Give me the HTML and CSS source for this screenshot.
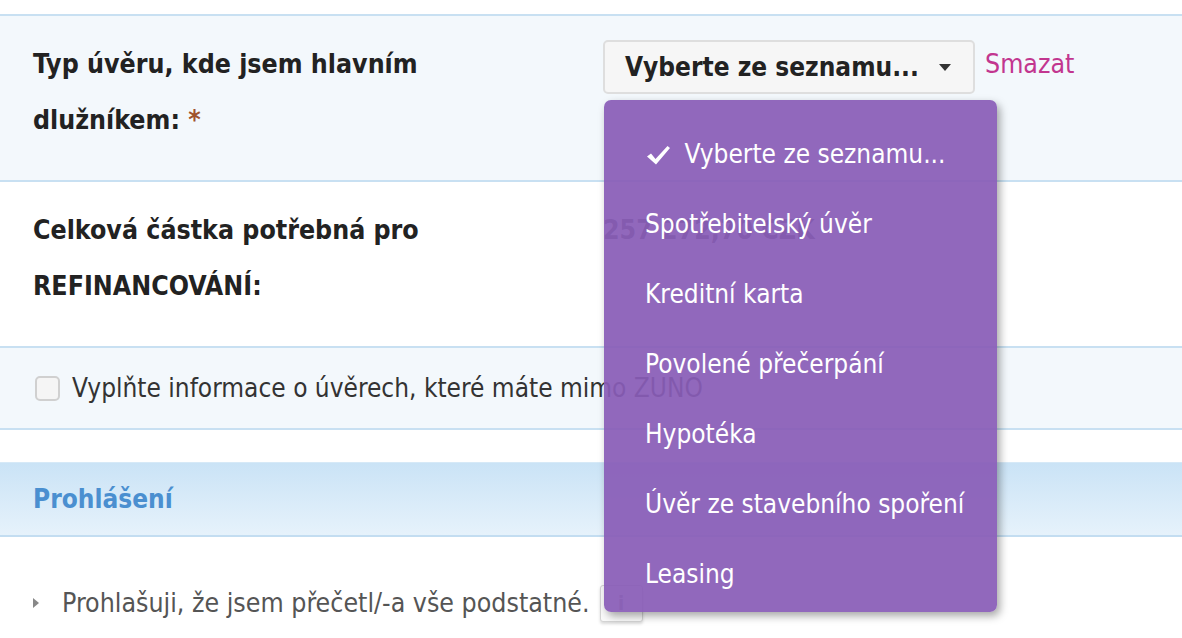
FILE: index.html
```html
<!DOCTYPE html>
<html lang="cs">
<head>
    <meta charset="UTF-8">
    <meta name="viewport" content="width=device-width, initial-scale=1.0">
    <title>Úvěry mimo ZUNO</title>
    <link rel="stylesheet" href="styles.css">
</head>
<body>
    <div class="form">
        <div class="row shaded">
            <div class="label">Typ úvěru, kde jsem hlavním dlužníkem: <span class="req">*</span></div>
            <div class="field">
                <div class="select-wrap">
                    <div class="select">Vyberte ze seznamu... <span class="caret"></span></div>
                    <ul class="menu">
                        <li class="checked">
                            <svg class="tick" width="26" height="22" viewBox="0 0 26 22"><path d="M2 12.5 L6 9.5 L10.5 15 L22.5 2 L25 4 L11 20.5 Z" fill="#fff"/></svg>
                            Vyberte ze seznamu...
                        </li>
                        <li>Spotřebitelský úvěr</li>
                        <li>Kreditní karta</li>
                        <li>Povolené přečerpání</li>
                        <li>Hypotéka</li>
                        <li>Úvěr ze stavebního spoření</li>
                        <li>Leasing</li>
                    </ul>
                </div>
                <a class="clear" href="#">Smazat</a>
            </div>
        </div>

        <div class="row">
            <div class="label">Celková částka potřebná pro REFINANCOVÁNÍ:</div>
            <div class="field">
                <span class="amount">257 272,70 CZK</span>
            </div>
        </div>

        <div class="row shaded check-row">
            <label class="check"><span class="box"></span>Vyplňte informace o úvěrech, které máte mimo ZUNO</label>
        </div>

        <div class="section-head">Prohlášení</div>

        <div class="declare">
            <span class="bullet"></span>
            Prohlašuji, že jsem přečetl/-a vše podstatné.
            <span class="info">i</span>
        </div>
    </div>
</body>
</html>
```

FILE: styles.css
```css
body {
    margin: 0;
    padding: 0;
    font-family: "DejaVu Sans Condensed", "DejaVu Sans", sans-serif;
    font-stretch: condensed;
    color: #222;
    background: #fff;
}
.form {
    margin-top: 14px;
    border-top: 2px solid #c8e0f2;
}
.row {
    display: flex;
    padding: 20px 33px 32px;
    border-bottom: 2px solid #c8e0f2;
    font-size: 26.5px;
    line-height: 56px;
}
.shaded {
    background-color: #f3f8fc;
}
.label {
    width: 470px;
    margin-right: 100px;
    font-weight: bold;
    color: #222;
}
.req {
    color: #a0522d;
}
.field {
    display: flex;
    align-items: flex-start;
}
.select-wrap {
    position: relative;
}
.select {
    box-sizing: border-box;
    width: 372px;
    height: 54px;
    margin-top: 4px;
    padding: 0 20px;
    line-height: 50px;
    border: 2px solid #dedede;
    border-radius: 5px;
    background-color: #f6f6f6;
    font-weight: bold;
    font-size: 26px;
    color: #222;
    position: relative;
}
.caret {
    position: absolute;
    right: 22px;
    top: 22px;
    border-left: 6px solid transparent;
    border-right: 6px solid transparent;
    border-top: 7px solid #333;
}
.clear {
    margin-left: 10px;
    color: #c2368f;
    text-decoration: none;
}
.amount {
    font-weight: bold;
    color: #444;
}
.menu {
    position: absolute;
    left: 1px;
    top: 64px;
    z-index: 10;
    box-sizing: border-box;
    width: 393px;
    height: 512px;
    margin: 0;
    padding: 19px 0 3px;
    list-style: none;
    background-color: rgba(137, 92, 183, 0.93);
    border-radius: 7px;
    box-shadow: 3px 4px 8px rgba(0, 0, 0, 0.35);
    color: #fff;
    font-weight: normal;
    font-size: 26px;
}
.menu li {
    height: 70px;
    line-height: 70px;
    padding-left: 41px;
    white-space: nowrap;
}
.menu .tick {
    vertical-align: -3px;
    margin-right: 6px;
}
.check-row {
    padding: 12px 33px;
    font-size: 26px;
}
.check {
    display: flex;
    align-items: center;
    color: #333;
}
.box {
    width: 21px;
    height: 21px;
    margin: 0 12px 0 2px;
    border: 2px solid #d0d0d0;
    border-radius: 5px;
    background-color: #f5f5f5;
}
.section-head {
    margin-top: 32px;
    height: 72px;
    padding-left: 33px;
    line-height: 72px;
    border-top: 1px solid #d6e9f7;
    border-bottom: 2px solid #c3ddf1;
    background: linear-gradient(#cae3f6, #e6f2fb);
    color: #4a8fd0;
    font-weight: bold;
    font-size: 26px;
}
.declare {
    display: flex;
    align-items: center;
    margin-top: 38px;
    padding-left: 33px;
    font-size: 26.5px;
    line-height: 56px;
    color: #555;
}
.bullet {
    width: 0;
    height: 0;
    margin-right: 23px;
    border-top: 5px solid transparent;
    border-bottom: 5px solid transparent;
    border-left: 6px solid #888;
}
.info {
    display: inline-block;
    box-sizing: border-box;
    width: 43px;
    height: 37px;
    margin-left: 10px;
    border: 1px solid #d4d4d4;
    border-radius: 3px;
    background: #fafafa;
    box-shadow: 0 2px 3px rgba(0, 0, 0, 0.15);
    text-align: center;
    line-height: 35px;
    font-weight: bold;
    font-size: 20px;
    color: #999;
}
```
